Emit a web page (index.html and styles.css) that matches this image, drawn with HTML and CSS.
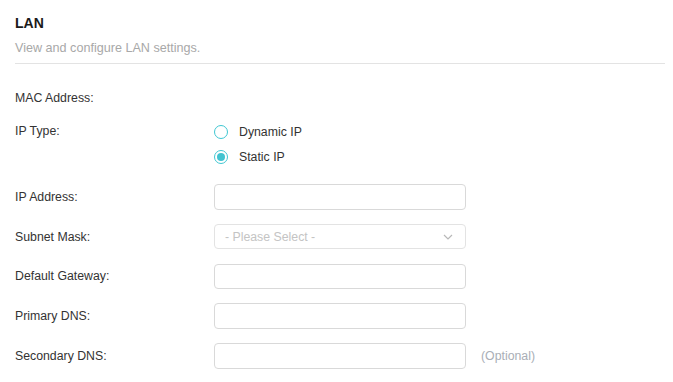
FILE: index.html
```html
<!DOCTYPE html>
<html lang="en">

<head>
    <meta charset="UTF-8">
    <meta name="viewport" content="width=device-width, initial-scale=1.0">
    <title>LAN</title>
    <link rel="stylesheet" href="styles.css">
</head>

<body>
    <div class="panel">
        <div class="panel-head">
            <h2 class="title">LAN</h2>
            <p class="subtitle">View and configure LAN settings.</p>
        </div>

        <div class="form">
            <div class="row row-text">
                <label class="label">MAC Address:</label>
                <div class="value"></div>
            </div>

            <div class="row row-radio">
                <label class="label">IP Type:</label>
                <div class="radio-group">
                    <label class="radio">
                        <span class="radio-dot"></span>
                        <span class="radio-text">Dynamic IP</span>
                    </label>
                    <label class="radio checked">
                        <span class="radio-dot"></span>
                        <span class="radio-text">Static IP</span>
                    </label>
                </div>
            </div>

            <div class="row row-input first">
                <label class="label">IP Address:</label>
                <div class="field"><input class="text-input" type="text"></div>
            </div>

            <div class="row row-input">
                <label class="label">Subnet Mask:</label>
                <div class="field select">
                    <span class="placeholder">- Please Select -</span>
                    <svg class="chevron" width="10" height="6" viewBox="0 0 10 6">
                        <path d="M1 1 L5 5 L9 1" fill="none" stroke="#b8b8b8" stroke-width="1.2" />
                    </svg>
                </div>
            </div>

            <div class="row row-input">
                <label class="label">Default Gateway:</label>
                <div class="field"><input class="text-input" type="text"></div>
            </div>

            <div class="row row-input">
                <label class="label">Primary DNS:</label>
                <div class="field"><input class="text-input" type="text"></div>
            </div>

            <div class="row row-input">
                <label class="label">Secondary DNS:</label>
                <div class="field"><input class="text-input" type="text"></div>
                <span class="hint">(Optional)</span>
            </div>
        </div>
    </div>
</body>

</html>
```

FILE: styles.css
```css
* {
    box-sizing: border-box;
    margin: 0;
    padding: 0;
    font-family: "Liberation Sans", Arial, sans-serif;
}

body {
    background: #ffffff;
    color: #333333;
}

.panel {
    width: 650px;
    margin-left: 15px;
}

.panel-head {
    padding-top: 13px;
    padding-bottom: 6px;
    border-bottom: 1px solid #e3e3e3;
}

.title {
    font-size: 14px;
    font-weight: bold;
    line-height: 20px;
    color: #1a1a1a;
}

.subtitle {
    margin-top: 6px;
    font-size: 12.6px;
    line-height: 18px;
    color: #a8a8a8;
}

.form {
    padding-top: 24px;
}

.row {
    display: flex;
    align-items: center;
}

.label {
    width: 199px;
    flex-shrink: 0;
    font-size: 12.3px;
    color: #333333;
}

.row-text {
    height: 20px;
}

.row-radio {
    margin-top: 11px;
    align-items: flex-start;
}

.row-radio .label {
    line-height: 25px;
}

.radio-group {
    display: flex;
    flex-direction: column;
}

.radio {
    height: 25px;
    display: flex;
    align-items: center;
    gap: 11px;
    font-size: 12.3px;
    color: #333333;
}

.radio-dot {
    width: 14px;
    height: 14px;
    border: 1px solid #3fc7d2;
    border-radius: 50%;
    display: flex;
    align-items: center;
    justify-content: center;
}

.radio.checked .radio-dot::after {
    content: "";
    width: 8px;
    height: 8px;
    border-radius: 50%;
    background: #42c3d0;
}

.row-input {
    height: 25.5px;
    margin-top: 14.25px;
}

.row-input.first {
    margin-top: 15px;
}

.field {
    width: 252px;
    height: 25.5px;
}

.text-input {
    width: 100%;
    height: 100%;
    border: 1px solid #d9d9d9;
    border-radius: 4px;
    outline: none;
    background: #ffffff;
}

.select {
    border: 1px solid #e3e3e3;
    border-radius: 4px;
    display: flex;
    align-items: center;
    justify-content: space-between;
    padding: 0 12px 0 10px;
}

.placeholder {
    font-size: 12.3px;
    color: #c4c4c4;
}

.chevron {
    display: block;
}

.hint {
    margin-left: 15px;
    font-size: 12.3px;
    color: #a9aeb6;
}
```
